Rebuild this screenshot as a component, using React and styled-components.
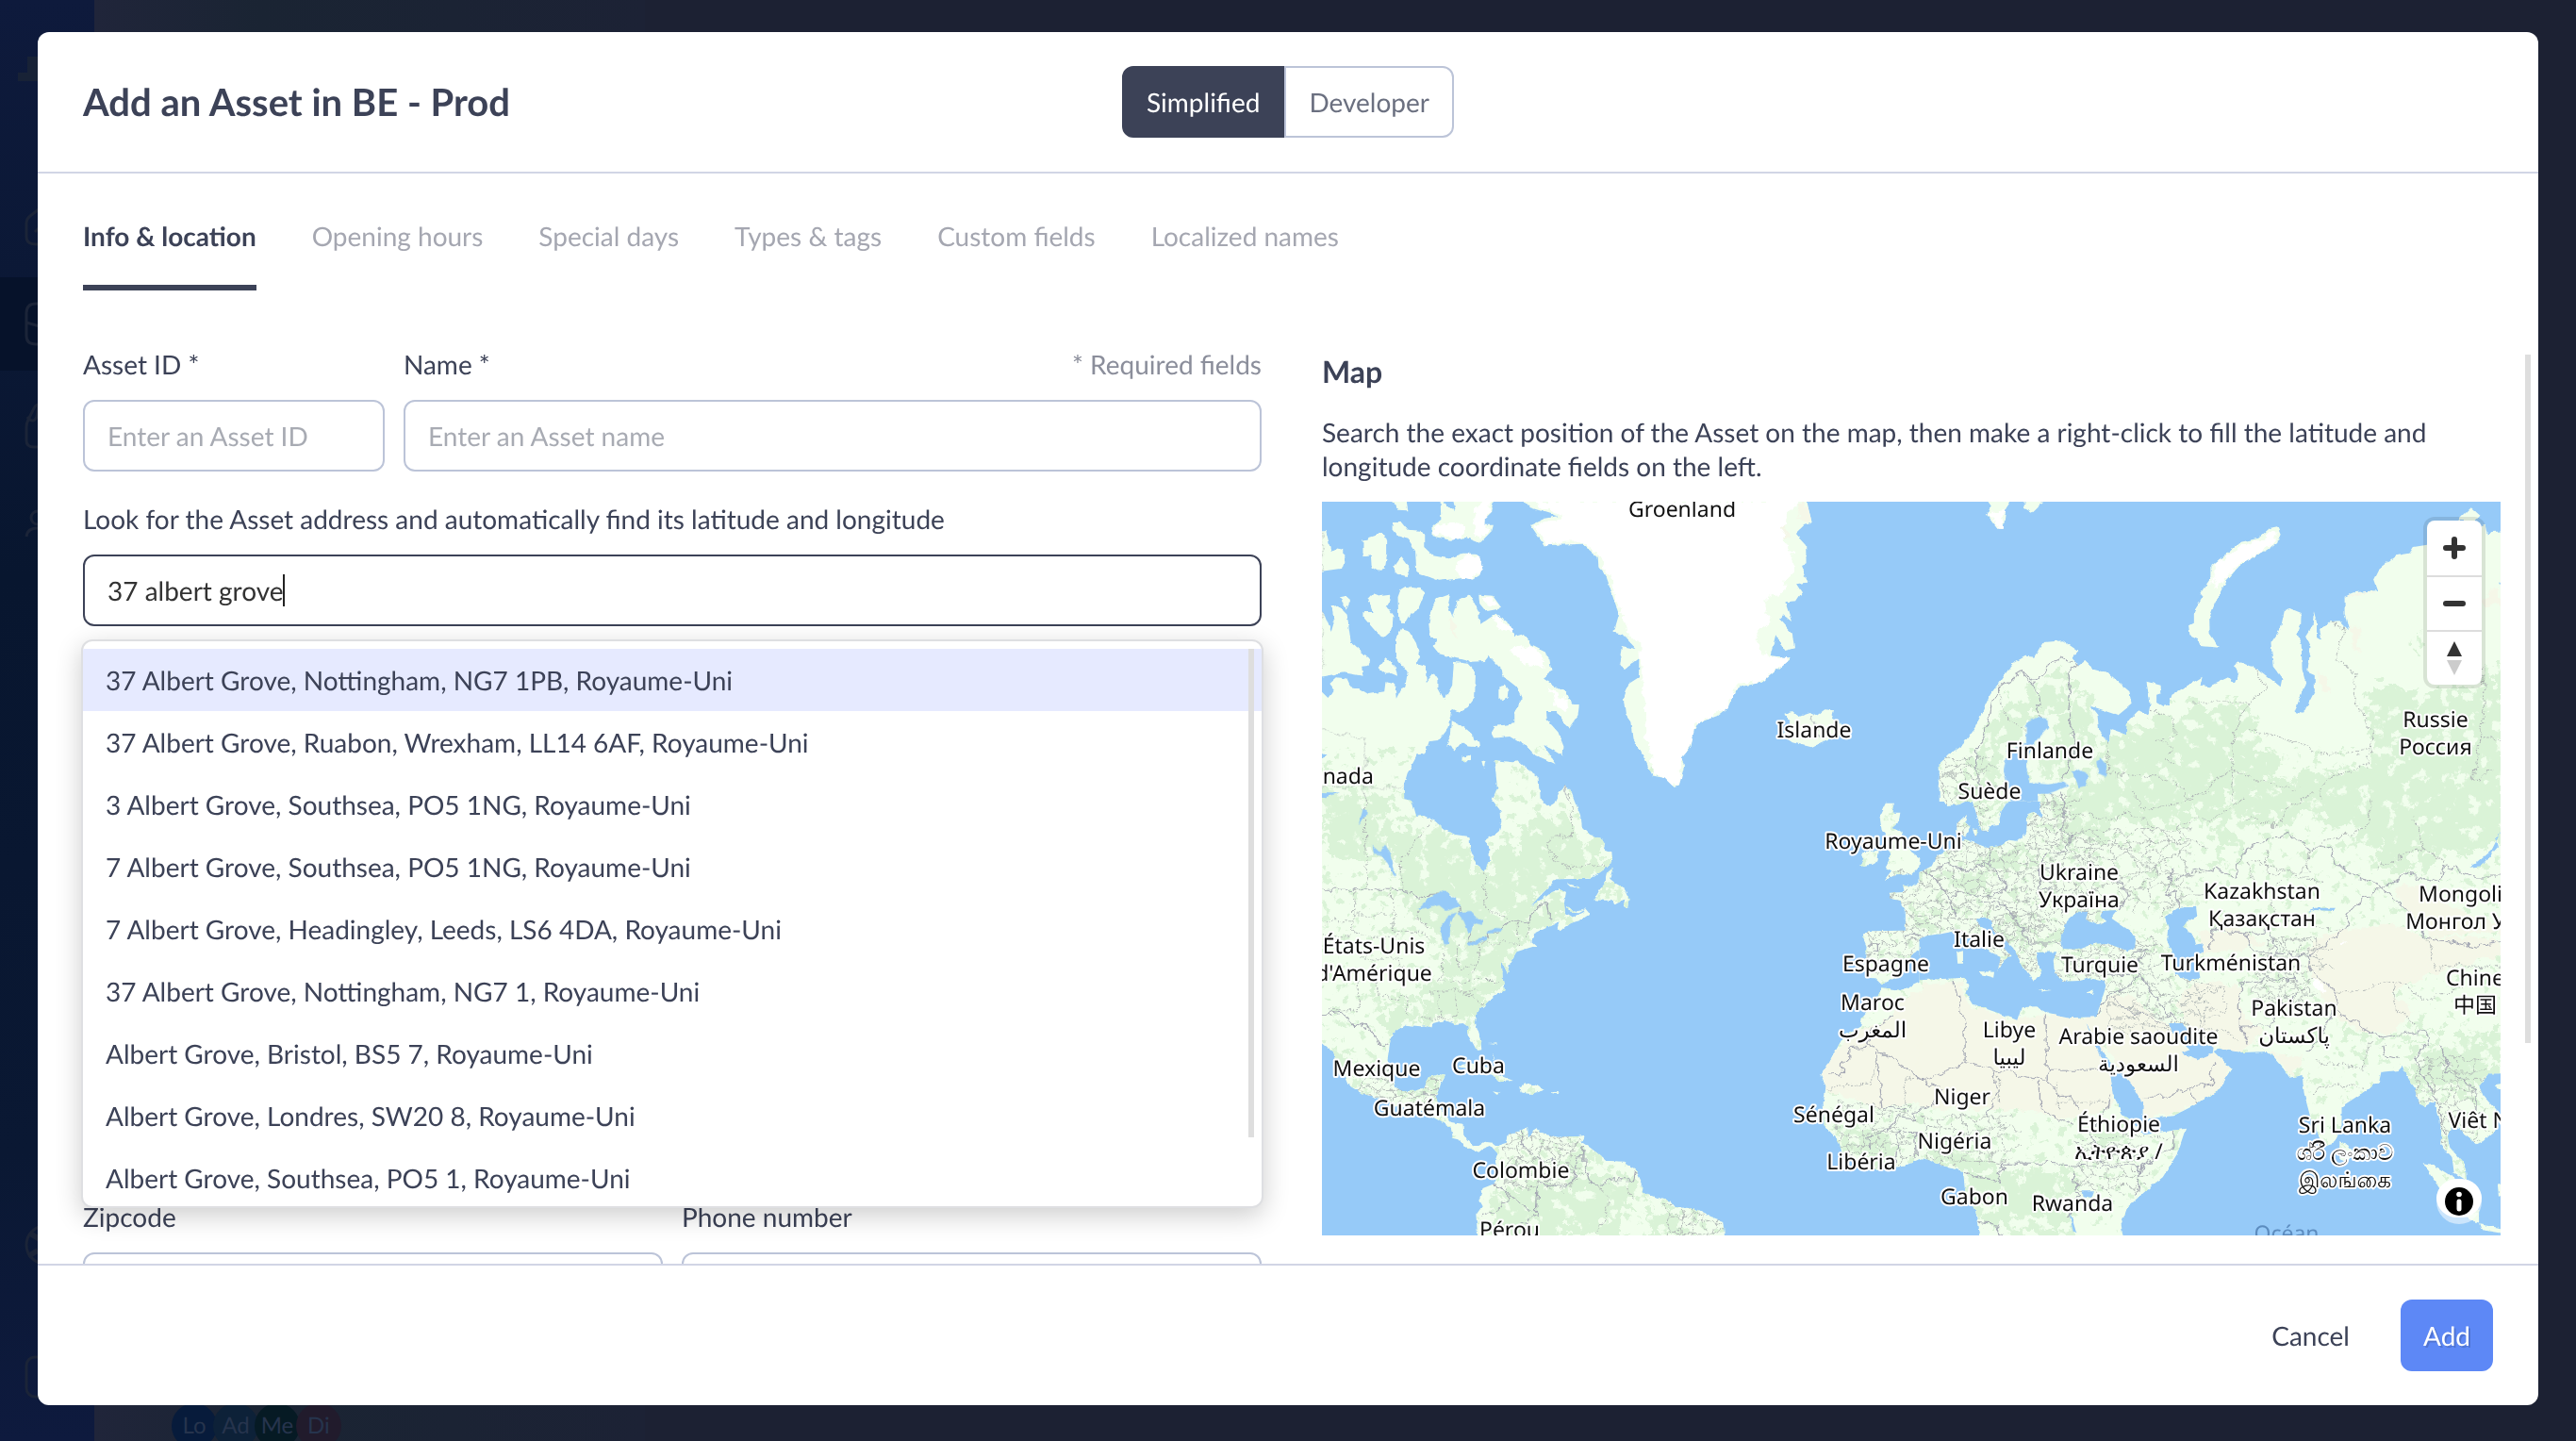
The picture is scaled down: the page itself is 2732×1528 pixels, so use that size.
import React from 'react';
import styled, { createGlobalStyle, ThemeProvider } from 'styled-components';

const theme = {
    textColor: '#3c4257',
    mutedColor: '#6b7080',
    tabColor: '#a5a7b1',
    placeholderColor: '#a8abb3',
    borderColor: '#bcc4d8',
    lineColor: '#d1d5e5',
    accentColor: '#5d88f6',
    highlightColor: '#e6eaff',
    scrollColor: '#dedede',
};

const GlobalStyle = createGlobalStyle`
    * {
        box-sizing: border-box;
    }
    html, body, #root {
        height: 100%;
    }
    body {
        background-color: #1c2133;
        color: ${theme.textColor};
        font-family: Lato, "Noto Sans", sans-serif;
        font-size: 28px;
        line-height: 36px;
        margin: 0;
        overflow: hidden;
        text-rendering: geometricPrecision;
    }
    button, input {
        font: inherit;
        text-rendering: inherit;
    }
`;

/* ---------- page behind the dialog ---------- */

const Page = styled.div`
    display: grid;
    grid-template-columns: 100px 584px 1fr;
    height: 100%;
`;
const Sidebar = styled.div`
    background: linear-gradient(180deg, #0e1a3c, #08162f 40%, #0a1833 80%, #0e1a3e);
    overflow: hidden;
`;
const SidebarIcons = styled.svg`
    display: block;
    height: 100%;
    width: 100px;
`;
const Panel = styled.div`
    align-items: flex-end;
    background: linear-gradient(90deg, #20253a, #1a2433 30%, #1c2235);
    display: flex;
    height: 100%;
    overflow: hidden;
    padding: 0 82px;
`;
const Avatars = styled.div`
    display: flex;
    margin-bottom: -8px;
`;
const Avatar = styled.div`
    background-color: ${(props) => props.$color};
    border-radius: 50%;
    color: #26344d;
    font-size: 24px;
    height: 48px;
    line-height: 48px;
    margin-right: -4px;
    text-align: center;
    width: 48px;
`;

/* ---------- dialog ---------- */

const Dialog = styled.div`
    background-color: #fff;
    border-radius: 12px;
    display: flex;
    flex-direction: column;
    inset: 34px 40px 38px;
    overflow: hidden;
    position: fixed;
`;
const Header = styled.header`
    align-items: center;
    border-bottom: 2px solid ${(props) => props.theme.lineColor};
    display: grid;
    grid-template-columns: 1fr auto 1fr;
    padding: 36px 48px;
`;
const Title = styled.h1`
    font-size: 40px;
    line-height: 52px;
    margin: 0;
`;
const Toggle = styled.div`
    display: flex;
`;
const ToggleButton = styled.button`
    background-color: ${(props) => props.$active ? props.theme.textColor : '#fff'};
    border: 2px solid ${(props) => props.$active ? props.theme.textColor : props.theme.borderColor};
    border-radius: ${(props) => props.$active ? '12px 0 0 12px' : '0 12px 12px 0'};
    color: ${(props) => props.$active ? '#fff' : props.theme.mutedColor};
    height: 76px;
    padding: 0 24px;
`;
const Tabs = styled.nav`
    display: flex;
    flex-shrink: 0;
    gap: 59px;
    padding: 48px 48px 0;
`;
const Tab = styled.button`
    background: none;
    border: 0;
    border-bottom: 6px solid ${(props) => props.$active ? props.theme.textColor : 'transparent'};
    color: ${(props) => props.$active ? props.theme.textColor : props.theme.tabColor};
    font-weight: ${(props) => props.$active ? 700 : 400};
    padding: 0 0 34px;
`;
const Body = styled.main`
    display: grid;
    flex: 1;
    gap: 64px;
    grid-template-columns: 1fr 1fr;
    min-height: 0;
    overflow: hidden;
    padding: 60px 40px 0 48px;
    position: relative;
`;
const BodyScroll = styled.div`
    background-color: ${(props) => props.theme.scrollColor};
    height: 730px;
    position: absolute;
    right: 8px;
    top: 68px;
    width: 6px;
`;
const Footer = styled.footer`
    align-items: center;
    border-top: 2px solid ${(props) => props.theme.lineColor};
    display: flex;
    flex-shrink: 0;
    gap: 24px;
    justify-content: flex-end;
    padding: 36px 48px;
`;
const FooterButton = styled.button`
    background-color: ${(props) => props.$primary ? props.theme.accentColor : 'transparent'};
    border: 0;
    border-radius: 12px;
    color: ${(props) => props.$primary ? '#fff' : 'inherit'};
    height: 76px;
    padding: 0 ${(props) => props.$primary ? 24 : 30}px;
    text-shadow: ${(props) => props.$primary ? '2px 2px 0 rgba(0, 0, 0, 0.15)' : 'none'};
`;

/* ---------- form ---------- */

const Form = styled.form`
    display: flex;
    flex-direction: column;
    gap: 32px;
`;
const Row = styled.div`
    display: grid;
    gap: 20px;
    grid-template-columns: ${(props) => props.$columns || '1fr'};
    margin-top: ${(props) => props.$below ? '576px' : 0};
`;
const Field = styled.div`
    display: flex;
    flex-direction: column;
    gap: 20px;
    position: relative;
`;
const LabelRow = styled.div`
    display: flex;
    justify-content: space-between;
`;
const Hint = styled.span`
    color: #8b8e9b;
`;
const Input = styled.input`
    background-color: #fff;
    border: 2px solid ${(props) => props.$focused ? props.theme.textColor : props.theme.borderColor};
    border-radius: 12px;
    color: #333;
    height: 76px;
    outline: 0;
    padding: 0 24px;
    width: 100%;
    &::placeholder {
        color: ${(props) => props.theme.placeholderColor};
        opacity: 1;
    }
`;
const Caret = styled.i`
    background-color: #222;
    bottom: 21px;
    height: 34px;
    left: 212px;
    position: absolute;
    width: 2px;
`;
const Suggestions = styled.ul`
    background-color: #fff;
    border: 2px solid #dedfe2;
    border-radius: 12px;
    box-shadow: 0 8px 28px rgba(0, 0, 0, 0.2);
    height: 603px;
    left: -2px;
    list-style: none;
    margin: 0;
    overflow: hidden;
    padding: 8px 0 0;
    position: absolute;
    right: -2px;
    top: 146px;
    z-index: 1;
`;
const Suggestion = styled.li`
    background-color: ${(props) => props.$active ? props.theme.highlightColor : 'transparent'};
    padding: 15px 24px;
`;
const SuggestionScroll = styled.li`
    background-color: ${(props) => props.theme.scrollColor};
    height: 518px;
    position: absolute;
    right: 8px;
    top: 8px;
    width: 6px;
`;

/* ---------- map ---------- */

const MapTitle = styled.h2`
    font-size: 32px;
    line-height: 52px;
    margin: 0 0 20px;
`;
const MapText = styled.p`
    margin: 0 0 20px;
`;
const MapFrame = styled.div`
    aspect-ratio: 1250 / 778;
    overflow: hidden;
    position: relative;
`;
const MapSvg = styled.svg`
    display: block;
    height: 100%;
    width: 100%;
    text {
        fill: #111;
        font-family: "Noto Sans", "Noto Sans CJK SC", "DejaVu Sans", sans-serif;
        font-size: 23px;
        paint-order: stroke;
        stroke: #fff;
        stroke-linejoin: round;
        stroke-width: 4px;
        text-anchor: middle;
    }
    text.sea {
        fill: #5c8cbf;
        stroke: none;
    }
`;
const MapControls = styled.div`
    background-color: #fff;
    border-radius: 8px;
    box-shadow: 0 0 0 4px rgba(0, 0, 0, 0.1);
    display: flex;
    flex-direction: column;
    position: absolute;
    right: 20px;
    top: 20px;
`;
const MapButton = styled.button`
    align-items: center;
    background: none;
    border: 0;
    display: flex;
    height: 58px;
    justify-content: center;
    padding: 0;
    width: 58px;
    & + & {
        border-top: 2px solid #ddd;
    }
`;
const MapInfo = styled.button`
    background: rgba(255, 255, 255, 0.5);
    border: 0;
    border-radius: 24px;
    bottom: 12px;
    height: 48px;
    padding: 0;
    position: absolute;
    right: 20px;
    width: 48px;
    svg {
        display: block;
    }
`;

// Each tile keeps the coordinates of its own sheet, the matrix puts it on the map.
const tiles = [
    {
        id: 'nw',
        matrix: 'matrix(0.4209 0 0 0.3333 -2 -182)',
        land: [
            '0,640 15,640 28,705 45,692 60,695 60,740 55,758 0,768',
            '108,670 120,668 122,660 135,655 140,648 162,648 169,670 169,715 163,758 143,765 130,755 128,715 108,718',
            '182,612 205,612 220,635 255,638 262,652 262,690 285,718 325,727 360,710 392,710 405,725 410,750 402,780 384,794 365,788 300,797 243,770 240,700 222,665 195,655 182,635',
            '205,720 220,745 224,765 218,783 190,775 186,755',
            '175,540 218,546 222,574 195,572 190,556',
            '303,540 320,560 342,575 335,540 437,540 433,578 415,600 414,620 437,620 433,638 403,677 368,660 328,668 284,655 284,622 305,603',
            '50,850 65,846 76,858 66,890',
            '122,855 135,838 152,846 176,842 177,860 168,880 184,910 182,955 162,977 145,965 108,912 108,897 132,897',
            '203,825 215,816 250,822 265,832 248,885 230,900 214,936 202,935 197,890 196,850',
            '278,900 285,870 295,855 328,840 322,880 333,912 345,865 378,843 400,895 402,938 443,902 480,940 490,975 515,966 530,998 565,1020 578,1050 583,1085 562,1108 600,1140 620,1150 635,1190 653,1192 650,1225 628,1265 612,1245 598,1215 570,1215 572,1240 600,1280 614,1325 612,1355 562,1318 595,1382 540,1350 520,1325 478,1293 440,1298 432,1278 440,1260 490,1252 490,1215 510,1170 500,1140 460,1100 458,1080 425,1037 415,1053 380,1055 300,1030 284,1005 297,982 278,980 274,935',
            '400,842 435,845 458,885 418,895 402,870',
            '0,1145 20,1170 35,1145 22,1125 40,1105 65,1108 75,1135 98,1140 122,1158 162,1150 165,1120 188,1125 192,1172 205,1140 215,1135 220,1090 190,1040 190,985 205,948 222,955 242,995 252,1040 243,1062 265,1070 268,1120 287,1090 298,1110 298,1140 313,1175 333,1130 337,1055 375,1062 392,1085 390,1170 372,1200 348,1215 332,1205 322,1265 297,1305 275,1308 264,1348 245,1352 220,1410 211,1450 211,1500 0,1500',
            '0,885 10,900 28,960 35,930 30,880 45,875 68,905 78,995 125,1045 120,1068 105,1070 108,1100 60,1090 0,1103',
            '165,1042 190,1070 195,1100 180,1092 165,1094 146,1075',
            '450,1135 465,1130 474,1145 472,1170 460,1180 450,1165',
            '332,1243 352,1255 385,1290 388,1305 402,1310 404,1328 375,1325 358,1310 338,1340 330,1322 317,1325 330,1290',
            '360,1358 380,1352 380,1365 368,1376 360,1370',
            '407,1375 417,1372 412,1395',
            '438,1368 485,1375 500,1372 525,1400 550,1420 554,1500 433,1500 447,1460 442,1400',
            '598,1500 617,1445 638,1500',
            '512,540 530,565 600,592 565,600 530,620 565,685 660,680 700,722 702,755 720,780 735,835 753,905 740,962 762,968 797,1015 760,1005 754,1065 770,1077 804,1045 803,1105 778,1125 765,1175 770,1225 785,1250 790,1300 812,1350 838,1418 868,1425 890,1452 905,1448 917,1390 912,1360 935,1325 942,1275 952,1250 1000,1228 1028,1200 1045,1150 1062,1135 1115,1120 1186,1043 1135,1035 1148,970 1172,1020 1195,1012 1190,965 1157,918 1165,905 1188,927 1172,865 1200,862 1214,835 1200,808 1227,803 1212,750 1225,742 1224,685 1197,648 1220,620 1240,615 1225,540',
            '1170,1222 1190,1212 1207,1230 1235,1218 1250,1228 1272,1207 1295,1210 1290,1235 1310,1250 1318,1280 1262,1312 1238,1327 1190,1312 1165,1290 1185,1250',
            '1562,1380 1580,1360 1580,1500 1562,1500',
        ],
        snow: [
            '520,540 610,592 570,605 540,622 570,678 660,676 706,722 725,780 760,905 775,960 806,1005 812,1120 820,1240 826,1320 840,1412 890,1450 905,1445 915,1390 912,1360 935,1325 942,1275 952,1250 985,1225 1020,1200 1045,1150 1062,1128 1115,1115 1180,1045 1110,1030 1105,960 1140,930 1125,900 1125,850 1170,830 1165,800 1195,770 1190,700 1165,660 1175,600 1200,540',
            '290,625 330,612 365,622 362,655 330,664 290,652',
            '390,570 412,546 433,546 430,580 412,605 412,625 432,628 403,672 386,650',
            '340,760 350,725 370,712 392,712 405,728 408,750 400,778 384,792 355,786',
            '440,915 455,912 485,950 482,965 450,950',
            '480,1020 530,1000 560,1035 565,1075 540,1065 515,1060',
            '570,1135 600,1150 625,1195 620,1215 598,1190',
            '405,850 430,848 450,880 430,878',
        ],
        forest: ['0,1455 90,1452 110,1470 200,1460 200,1500 0,1500', '0,1370 20,1375 25,1400 0,1400'],
        sand: ['1150,650 1175,612 1180,660', '1200,546 1225,546 1235,600 1210,610', '325,910 340,930 345,985 330,960'],
        water: ['0,1345 18,1355 0,1365', '0,1470 50,1472 20,1484 0,1490'],
        borders: ['1238,1220 1240,1250 1260,1290', '615,1445 620,1480 630,1500'],
        dotted: ['0,1262 20,1280 113,1300 113,1500', '0,1453 210,1453', '5,546 5,1100'],
    },
    {
        id: 'ne',
        matrix: 'matrix(0.4413 0 0 0.3333 638 -182)',
        land: [
            '152,540 212,540 198,568 192,632 178,632 152,590 163,560',
            '245,540 288,548 262,581 240,565',
            '850,625 858,650 850,675 825,700 768,740 728,800 700,870 687,915 688,965 711,1010 665,1005 660,982 640,970 637,940 650,930 650,895 672,848 665,838 692,785 692,750 760,675 805,662 832,630',
            '38,1500 38,1380 60,1352 95,1318 125,1262 160,1160 215,1060 245,1037 268,1040 290,993 335,988 373,1022 358,1045 372,1068 388,1053 410,1080 445,1092 495,1150 500,1190 468,1225 400,1195 418,1225 422,1275 447,1315 447,1270 487,1288 490,1245 517,1210 540,1225 545,1190 536,1118 570,1130 572,1155 560,1160 560,1185 575,1197 590,1192 597,1160 670,1103 665,1130 685,1135 732,1105 747,1125 757,1095 748,1070 755,1053 805,1080 858,1135 862,1108 840,1070 835,995 858,950 868,890 880,885 908,900 907,935 898,965 908,1000 910,1080 918,1120 892,1215 912,1220 928,1180 940,1150 940,1095 923,1085 930,1010 918,975 935,940 938,895 945,930 945,975 957,985 952,955 975,928 1000,925 1022,955 1012,900 1012,848 1035,835 1092,828 1083,795 1098,755 1135,718 1168,710 1178,690 1210,683 1350,620 1355,655 1365,642 1400,640 1400,1500',
            '1285,605 1316,565 1338,590 1325,608',
        ],
        snow: [
            '845,635 850,670 768,735 720,805 700,822 692,790 705,740 760,685 815,665',
            '165,575 195,570 190,630 178,630 160,595',
        ],
        forest: [
            '150,1300 200,1180 330,1062 345,1110 340,1200 300,1230 270,1220 240,1260 240,1320 195,1340 170,1420 180,1500 90,1500 110,1400',
            '360,1130 390,1150 400,1200 420,1290 400,1350 340,1400 260,1420 310,1280',
            '440,1330 500,1260 600,1220 660,1195 780,1190 800,1260 770,1310 850,1360 830,1400 900,1440 960,1400 1060,1390 1075,1290 1060,1190 1080,1120 1150,1150 1210,1150 1270,1130 1340,1140 1345,1070 1400,1065 1400,1500 330,1500 380,1420',
            '1165,990 1200,975 1210,1020 1185,1025',
        ],
        sand: [
            '1345,860 1387,815 1387,870 1350,880',
            '1022,940 1045,945 1048,1020 1035,1010',
            '945,1090 970,1100 978,1160 960,1140',
            '1020,838 1090,830 1060,842 1020,848',
        ],
        water: [
            '275,1228 298,1240 300,1265 268,1310 250,1360 248,1400 255,1440 300,1445 335,1437 348,1450 300,1475 275,1475 275,1500 210,1500 193,1400 200,1340 247,1315 246,1260 258,1240',
            '370,1395 397,1415 390,1450 375,1455 355,1405',
            '425,1360 440,1385 438,1420 420,1410 415,1370',
            '1382,808 1390,800 1390,815',
        ],
        borders: [
            '130,1500 128,1330 150,1300 165,1180 190,1130 240,1090 270,1115 310,1060 335,1045 370,1065 345,1090 355,1150 350,1220 362,1300 365,1350 330,1437',
            '240,1095 270,1130 283,1245',
        ],
        dotted: [
            '645,1185 780,1185 825,1145 800,1080',
            '780,1185 745,1280 740,1500',
            '545,1210 605,1230 605,1290 565,1300 600,1330 580,1370 605,1380',
            '985,925 1010,960 990,1050 1040,1090 1035,1180 1080,1280 1070,1380 960,1430 950,1500',
            '780,1270 880,1300 950,1350 1070,1340',
            '600,1430 640,1500 740,1395 800,1430 900,1460',
            '1340,1070 1350,1150 1340,1290 1387,1310',
            '1340,1290 1320,1430 1370,1400',
            '445,1300 440,1410 590,1425',
            '172,1110 200,1240 250,1270',
        ],
    },
    {
        id: 'sw',
        matrix: 'matrix(0.4209 0 0 0.3333 -2 308)',
        land: [
            '0,-10 211,-10 212,22 232,28 243,78 262,75 290,92 310,115 340,135 377,142 378,180 395,230 415,250 428,215 425,170 415,155 450,125 457,95 455,60 432,22 443,-10 554,-10 555,20 577,45 590,35 608,-10 630,-10 658,80 660,110 680,135 708,148 718,165 715,180 735,190 737,225 720,240 680,275 595,277 530,362 560,340 585,318 605,307 620,318 615,355 618,385 635,398 662,382 668,370 680,388 655,408 628,418 605,442 598,432 603,412 540,450 533,475 545,488 495,508 480,540 472,575 458,540 460,590 465,630 440,650 395,700 392,735 403,780 407,820 395,822 375,775 372,745 360,735 340,738 315,725 285,735 280,748 262,742 250,745 215,740 190,760 177,790 170,850 190,935 210,952 240,950 262,940 272,908 300,897 316,902 300,940 292,965 300,1000 330,1050 360,1055 362,1095 372,1110 385,1125 400,1125 415,1112 435,1115 445,1125 470,1115 475,1085 505,1078 523,1062 525,1100 545,1065 555,1085 600,1097 650,1095 665,1092 668,1105 655,1110 680,1130 700,1150 720,1172 765,1175 795,1200 812,1245 810,1270 850,1290 885,1302 895,1320 945,1325 985,1350 1015,1365 1020,1420 398,1420 393,1345 408,1318 400,1300 410,1260 440,1245 448,1215 440,1180 448,1150 430,1125 410,1135 400,1145 370,1130 350,1105 335,1100 330,1070 300,1045 250,1010 190,1000 150,975 100,955 70,930 60,900 40,870 35,830 0,795',
            '738,240 730,275 745,290 765,305 778,340 775,368 765,360 768,340 740,360 735,345 690,343 705,310 718,290 725,255',
            '622,290 650,300 655,305 630,300',
            '622,365 640,380 665,374 650,385 628,382',
            '340,872 380,862 435,880 450,900 487,918 450,922 435,900 380,880',
            '502,937 520,928 545,932 565,948 530,960 505,955',
            '435,952 455,957 445,962',
            '585,953 600,955 598,960 585,958',
            '425,798 445,796 446,808 442,800',
            '435,830 440,845 436,850',
            '1425,35 1447,35 1440,65 1462,65 1458,95 1440,115 1467,125 1470,150 1490,190 1512,210 1510,235 1490,262 1450,265 1420,282 1440,250 1425,240 1435,215 1435,195 1425,165 1425,130 1415,120 1410,75',
            '1370,190 1408,185 1405,220 1390,230 1360,236 1370,210 1365,195',
            '1580,190 1545,235 1515,255 1512,280 1488,302 1468,295 1472,318 1432,320 1435,338 1460,345 1475,375 1475,440 1382,442 1367,460 1377,490 1370,560 1378,590 1398,592 1415,612 1450,590 1480,560 1490,520 1530,485 1532,465 1580,445',
            '1580,597 1510,605 1465,630 1415,622 1400,665 1365,720 1362,745 1320,775 1298,825 1283,860 1262,900 1275,935 1268,990 1270,1060 1300,1100 1315,1150 1360,1185 1400,1200 1470,1190 1515,1165 1580,1165',
        ],
        snow: [],
        forest: [
            '0,30 60,10 120,0 200,30 200,150 300,110 340,150 370,200 415,260 430,210 500,150 520,90 590,60 640,110 720,200 720,240 670,270 590,270 530,360 600,310 615,350 615,400 540,450 530,480 490,500 465,630 392,700 385,740 250,740 240,680 260,620 320,560 350,500 300,480 240,400 200,340 190,200 20,190',
            '140,700 200,640 240,690 220,740 170,770',
            '20,760 60,830 80,900 140,960 100,940 40,850',
            '270,910 310,905 295,950 260,990 190,990',
            '480,1250 560,1240 600,1260 700,1200 800,1240 830,1300 740,1330 760,1410 420,1410 440,1300',
            '560,1160 650,1130 690,1180 660,1200',
            '820,1330 910,1330 900,1410 840,1410',
            '1300,1070 1380,1070 1450,1100 1450,1190 1330,1160',
            '1480,400 1560,360 1560,440 1490,440',
            '700,300 770,310 760,345 700,340',
            '360,780 395,780 400,815',
        ],
        sand: ['1580,615 1500,640 1475,660 1440,720 1365,760 1298,825 1262,900 1275,945 1300,960 1410,1000 1480,990 1580,1010'],
        water: [
            '245,372 270,340 300,315 322,318 345,345 352,362 318,378 300,360 272,368',
            '325,390 345,382 330,410 325,480 310,488 303,430',
            '345,382 378,378 395,400 410,410 408,422 385,415 382,440 375,450 362,410',
            '370,485 400,465 422,458 420,470 375,492',
            '418,445 445,432 460,435 455,447 425,450',
            '165,165 180,200 190,270 172,235 155,200 135,195 132,170 150,190',
            '108,50 118,60 115,80 97,102 103,75',
        ],
        borders: [
            '0,310 206,310 210,318 260,332 300,330 345,365 378,400 380,450 370,488 420,465 425,445 455,440 478,412 525,412 550,360 570,352 578,400 585,405',
            '0,710 55,700 90,750 110,738 130,755 150,805 172,812',
            '258,965 300,965 300,940',
            '510,1070 510,1120 545,1170 580,1160 600,1200 640,1200 670,1130',
            '665,1130 665,1180 690,1250 740,1235 790,1235 795,1205',
            '550,1240 605,1258 640,1230 640,1200',
            '430,1240 470,1275 505,1310 545,1330 550,1250',
            '470,1275 470,1300 408,1350', '545,1330 550,1345 505,1370',
            '1440,720 1390,760 1380,800 1533,930 1560,940',
            '1403,832 1416,1000 1480,1010', '1425,832 1403,832',
            '1283,900 1315,897 1315,870 1330,850 1330,812 1378,808',
            '1568,940 1540,1000 1495,1015 1500,1040 1450,1035 1420,1090 1380,1095 1385,1140',
            '1455,1080 1500,1082 1505,1160', '1455,1080 1450,1190',
            '1475,450 1530,468', '1382,490 1405,490 1405,505 1378,510', '1520,240 1568,290',
        ],
        dotted: [
            '113,0 113,150 120,310', '206,310 205,210 287,90', '415,250 415,370 470,400',
            '630,0 635,140 580,145 580,200 620,240 720,230', '85,310 85,460 200,460',
            '0,410 85,410', '85,387 187,387', '180,310 187,445 255,445 275,470', '0,458 100,458',
            '100,525 215,525', '98,595 98,695 18,695', '140,600 145,645 220,660 220,715',
            '205,530 205,580', '308,490 308,580 290,600 465,602', '345,490 350,560 400,540',
            '273,633 400,633', '400,490 403,530 380,580', '300,635 300,720', '335,635 345,715 250,715',
            '365,635 400,670 425,690', '400,480 500,480 500,412', '520,412 520,465', '250,380 240,400 275,430',
            '730,1310 700,1410', '730,1310 700,1250', '920,1330 905,1410', '790,1300 770,1250',
            '1275,940 1385,930 1403,850', '1490,895 1465,940 1480,1000',
        ],
    },
    {
        id: 'se',
        matrix: 'matrix(0.4413 0 0 0.3333 638 308)',
        land: [
            '38,-10 40,10 55,42 85,40 115,20 125,60 140,125 155,125 160,108 180,105 187,60 210,15 210,-10',
            '80,100 105,68 100,95 112,110 100,140 80,130',
            '118,115 132,120 125,145',
            '275,-10 285,15 280,50 285,80 265,62 250,70 247,133 225,155 205,152 180,172 155,178 130,165 100,150 60,180 30,205 20,235 -10,255 -10,1165 0,1165 60,1195 95,1205 100,1270 125,1330 135,1420 480,1420 475,1375 490,1320 540,1262 575,1225 610,1150 630,1070 530,1090 480,1020 455,960 450,900 415,800 470,900 500,930 525,990 525,1040 600,1030 645,1000 715,945 720,920 740,880 697,825 710,815 765,828 828,825 845,850 865,880 880,908 910,900 915,960 930,1035 960,1125 985,1115 1005,1060 1005,1000 1040,970 1095,920 1100,890 1140,885 1150,870 1165,910 1180,940 1190,990 1205,1000 1228,980 1240,1040 1245,1085 1242,1120 1270,1160 1275,1210 1305,1235 1303,1200 1295,1175 1265,1130 1260,1100 1275,1050 1300,1090 1330,1120 1345,1110 1375,1075 1375,1010 1345,965 1335,935 1360,895 1400,895 1400,-10',
            '1000,1110 1020,1120 1035,1150 1020,1175 1000,1165',
            '1200,1180 1225,1185 1290,1240 1335,1330 1335,1370 1310,1360 1240,1260',
            '1335,1375 1400,1390 1400,1405 1340,1392',
            '1380,1250 1400,1240 1400,1300 1382,1285',
            '1375,930 1400,925 1400,955 1378,945',
        ],
        snow: ['935,600 950,600 975,630 960,635 935,615', '1000,480 1020,478 1005,490'],
        forest: [
            '335,-10 1400,-10 1400,150 1320,200 1250,190 1180,240 1100,250 1090,180 1040,120 960,60 870,90 780,80 740,120 730,220 710,230 700,100 620,90 540,100 480,90 420,150 360,180 330,120',
            '130,60 185,50 165,110 140,120',
            '180,180 280,200 240,240 190,250 150,300 100,320 60,290 120,240',
            '180,410 240,440 250,500 220,490', '250,440 330,450 330,495 260,490',
            '345,490 440,485 430,500 350,520', '510,440 590,500 560,500',
            '950,700 1040,750 1150,780 1240,770 1170,800 1100,800 1000,760',
            '1160,860 1240,780 1330,780 1400,740 1400,850 1330,940 1230,940 1200,980 1170,910',
            '0,1130 100,1110 160,1180 180,1220 90,1200 30,1190',
            '200,1210 300,1190 370,1240 350,1300 330,1380 240,1410 160,1360 110,1290 110,1220',
            '420,1060 480,1080 470,1130 420,1120',
            '1270,1170 1300,1180 1300,1230 1280,1210', '915,930 930,1020 950,1060 935,1050',
            '1380,1250 1400,1250 1400,1290', '1250,900 1300,930 1350,1000 1370,1020 1300,980',
        ],
        sand: [
            '-10,615 90,600 110,680 225,725 300,705 410,720 440,850 470,960 440,1010 330,1040 250,1010 -10,1005',
            '410,740 440,660 490,640 540,690 610,760 640,850 700,820 740,880 715,945 600,1030 525,1040 500,960',
            '630,620 700,600 760,620 765,700 810,760 770,830 700,815 650,760 610,680',
            '660,440 750,450 770,500 670,510', '700,390 780,460 820,480 760,500',
            '930,480 1000,440 1120,420 1210,460 1400,470 1400,520 1260,560 1180,600 1130,640 1180,700 1120,770 1040,750 980,700 920,560',
            '1130,300 1180,290 1250,350 1400,440 1220,460 1160,370', '830,830 910,840 890,900 860,870',
        ],
        water: [
            '-10,465 15,455 45,450 85,440 112,460 150,500 185,525 178,570 200,525 210,522 165,450 130,420 130,400 150,398 162,410 165,440 200,475 222,505 232,540 265,602 285,570 275,545 270,510 320,508 312,535 315,575 335,602 375,600 400,592 435,602 438,620 415,715 345,718 300,705 270,682 235,685 225,725 185,705 120,675 103,640 110,615 100,590 -10,598',
            '345,410 370,380 395,380 390,405 420,420 440,410 425,395 430,378 465,375 450,400 495,440 510,465 508,495 490,505 440,480 410,482 375,500 335,498 330,465 340,430',
            '580,400 610,370 655,362 658,395 635,410 625,430 650,460 655,485 675,480 670,510 655,520 665,590 640,600 605,580 600,520 585,470 588,430',
            '590,735 625,735 640,775 680,800 697,812 695,830 660,850 620,830 640,820 600,770',
            '390,735 420,800 440,850 460,870 500,930 527,990 527,1050 480,1030 455,960 450,900 415,810',
            '1390,120 1375,150 1380,175 1340,235 1310,240 1330,225 1365,185',
            '925,385 940,368 990,368 985,378 940,375',
            '380,1270 410,1270 405,1290 382,1285',
            '350,1340 358,1360 368,1405 360,1400',
        ],
        islands: [
            '133,570 170,572 168,590 135,578',
            '80,510 95,505 95,545 82,545',
            '275,625 308,630 290,633',
            '390,638 410,628 405,642',
        ],
        borders: [
            '330,0 340,60 330,120 360,130 340,180 280,210 290,240 400,260 480,290 490,330 470,375',
            '600,240 580,330 610,320 610,370', '600,280 680,240 750,270 770,180 880,130 930,190 960,160 1000,240 1100,300 1030,370 1010,440 920,520 850,510 830,440 770,450',
            '1100,300 1160,260 1240,290 1250,230 1330,270 1400,270',
            '1100,300 1160,370 1210,460 1330,490 1400,465',
            '693,495 693,435 770,450 790,500 850,520', '920,520 930,570 980,620 1000,700 1100,780 1200,760 1210,790 1180,850',
            '980,700 960,760 920,830', '760,610 760,740 780,800', '760,610 830,590 900,600', '760,745 830,740 850,690 900,640',
            '295,705 295,920 380,1010', '295,886 435,886', '75,600 100,760 100,860 0,920',
            '100,860 165,880 295,920', '165,880 175,960 150,1040', '282,925 282,1010 360,1060',
            '415,715 440,650 510,700 590,740', '440,650 510,600 520,580 440,580', '520,580 570,680 610,730',
            '525,970 580,970 640,940 690,930 695,850', '640,940 655,985',
            '155,178 160,230 110,250 60,230 20,250', '160,230 200,300 170,330 110,320 60,330',
            '240,440 250,480 330,480', '280,210 280,300 330,330', '130,350 200,360 240,440', '0,240 40,290 60,330 75,400',
            '450,960 440,1010 400,1080 430,1190', '430,1190 520,1190 600,1130 600,1080', '520,1190 510,1280',
            '95,1210 180,1240 190,1180 300,1180 430,1190', '360,1200 370,1280 350,1350', '130,1370 180,1375 190,1410',
            '520,540 540,500 500,510', '1110,800 1115,840 1140,850', '1180,850 1240,990 1250,1090',
            '1240,800 1260,880 1330,950 1330,1060',
        ],
        dotted: [
            '340,60 450,90 490,60 560,120 620,160 610,100 700,80 770,20', '500,0 530,60 600,40 680,0',
            '420,140 500,190 560,180 590,240', '490,330 560,260 540,200', '780,80 850,110 870,60 940,0',
            '800,300 780,220 850,240 960,290', '860,280 830,360 880,410 1000,440', '960,160 1060,120 1080,20',
            '1090,240 1200,180 1180,80', '1200,180 1260,230', '820,190 830,260 920,250 925,190',
            '990,640 1060,620 1140,600 1200,660 1300,620', '1140,600 1130,680 1180,740',
            '650,640 720,620 730,700 680,690 670,780', '325,920 325,1010', '325,985 440,985', '180,900 180,990',
            '1210,470 1230,560 1300,550 1400,560', '1070,800 1060,880 940,860', '930,950 1000,930 1060,940',
            '380,1100 500,1090 590,1100', '640,800 720,760 760,790',
        ],
    },
];

// Small districts: an irregular honeycomb over the densely divided regions.
const meshAreas = [
    { x: 575, y: 395, width: 60, height: 95, cell: 13 },
    { x: 640, y: 360, width: 180, height: 100, cell: 13 },
    { x: 655, y: 270, width: 40, height: 100, cell: 13 },
    { x: 745, y: 310, width: 45, height: 50, cell: 10 },
    { x: 710, y: 440, width: 50, height: 55, cell: 11 },
    { x: 780, y: 465, width: 110, height: 40, cell: 11 },
    { x: 830, y: 510, width: 100, height: 50, cell: 14 },
    { x: 990, y: 500, width: 55, height: 40, cell: 10 },
    { x: 1000, y: 465, width: 60, height: 30, cell: 11 },
    { x: 40, y: 605, width: 80, height: 35, cell: 11 },
    { x: 195, y: 670, width: 70, height: 60, cell: 11 },
    { x: 545, y: 640, width: 70, height: 55, cell: 13 },
    { x: 640, y: 655, width: 90, height: 50, cell: 13 },
    { x: 1160, y: 590, width: 70, height: 90, cell: 14 },
    { x: 800, y: 680, width: 60, height: 50, cell: 14 },
    { x: 800, y: 350, width: 110, height: 80, cell: 18 },
    { x: 365, y: 745, width: 50, height: 40, cell: 12 },
];

const jitter = (a, b) => {
    const n = Math.sin(a * 12.9898 + b * 78.233) * 43758.5453;
    return n - Math.floor(n) - 0.5;
};

const meshPath = ({ x, y, width, height, cell }) => {
    const point = (i, j) => {
        const px = x + i * cell + (j % 2) * cell / 2 + jitter(i + x, j) * cell * 0.7;
        const py = y + j * cell * 0.8 + jitter(j, i + y) * cell * 0.7;
        return `${px.toFixed(1)} ${py.toFixed(1)}`;
    };
    const parts = [];
    for (let j = 0; j < height / (cell * 0.8); j++) {
        for (let i = 0; i < width / cell; i++) {
            parts.push(`M${point(i, j)}L${point(i + 1, j)}`);
            parts.push(`M${point(i, j)}L${point(i, j + 1)}`);
        }
    }
    return parts.join('');
};

const mapLabels = [
    [382, 8, 'Groenland'], [522, 242, 'Islande'], [14, 291, 'Canada'], [772, 264, 'Finlande'],
    [708, 307, 'Suède'], [1181, 231, 'Russie', 'Россия'], [606, 360, 'Royaume-Uni'],
    [803, 393, 'Ukraine', 'Україна'], [997, 413, 'Kazakhstan', 'Қазақстан'],
    [1214, 416, 'Mongolie', 'Монгол Улс'], [55, 471, 'États-Unis', 'd\'Amérique'],
    [598, 490, 'Espagne'], [697, 464, 'Italie'], [825, 491, 'Turquie'], [964, 489, 'Turkménistan'],
    [1223, 505, 'Chine', '中国'], [584, 531, 'Maroc', 'المغرب'], [729, 560, 'Libye', 'ليبيا'],
    [866, 567, 'Arabie saoudite', 'السعودية'], [1031, 537, 'Pakistan', 'پاکستان'],
    [679, 631, 'Niger'], [671, 678, 'Nigéria'], [543, 650, 'Sénégal'], [572, 700, 'Libéria'],
    [845, 660, 'Éthiopie', 'ኢትዮጵያ /'], [692, 737, 'Gabon'], [796, 744, 'Rwanda'],
    [1085, 661, 'Sri Lanka', 'ශ්රී ලංකාව', 'இலங்கை'], [1244, 656, 'Viêt Nam'],
    [58, 601, 'Mexique'], [166, 598, 'Cuba'], [114, 643, 'Guatémala'], [211, 709, 'Colombie'],
    [199, 772, 'Pérou'],
];

const Shapes = ({ list = [], ...rest }) => (
    <g {...rest}>
        {list.map((points) => <polygon key={points} points={points} />)}
    </g>
);

const Lines = ({ list, ...rest }) => (
    <g fill="none" {...rest}>
        {list.map((points) => <polyline key={points} points={points} />)}
    </g>
);

const WorldMap = () => (
    <MapSvg viewBox="0 0 1250 778" preserveAspectRatio="xMidYMid slice" role="img" aria-label="Map">
        <defs>
            <filter id="mottle" x="0" y="0" width="1250" height="778" filterUnits="userSpaceOnUse">
                <feTurbulence type="fractalNoise" baseFrequency="0.06" numOctaves="4" seed="3" result="noise" />
                <feDisplacementMap in="SourceGraphic" in2="noise" scale="50" xChannelSelector="R" yChannelSelector="G" result="ragged" />
                <feTurbulence type="fractalNoise" baseFrequency="0.07" numOctaves="4" seed="8" />
                <feColorMatrix values="0 0 0 0 0  0 0 0 0 0  0 0 0 0 0  14 0 0 0 -8.5" result="holes" />
                <feComposite in="ragged" in2="holes" operator="out" />
            </filter>
            <filter id="speckle" x="0" y="0" width="1250" height="778" filterUnits="userSpaceOnUse">
                <feTurbulence type="fractalNoise" baseFrequency="0.1" numOctaves="4" seed="21" />
                <feColorMatrix values="0 0 0 0 0  0 0 0 0 0  0 0 0 0 0  16 0 0 0 -9.8" result="spots" />
                <feComposite in="SourceGraphic" in2="spots" operator="in" />
            </filter>
            <filter id="ragged" x="0" y="0" width="1250" height="778" filterUnits="userSpaceOnUse">
                <feTurbulence type="fractalNoise" baseFrequency="0.09" numOctaves="3" seed="5" />
                <feDisplacementMap in="SourceGraphic" scale="12" xChannelSelector="R" yChannelSelector="G" />
            </filter>
            <filter id="coast" x="0" y="0" width="1250" height="778" filterUnits="userSpaceOnUse">
                <feTurbulence type="fractalNoise" baseFrequency="0.15" numOctaves="2" seed="9" />
                <feDisplacementMap in="SourceGraphic" scale="4" xChannelSelector="R" yChannelSelector="G" />
            </filter>
            <clipPath id="land">
                {tiles.map((tile) => tile.land.map((points) => (
                    <polygon key={tile.id + points} points={points} transform={tile.matrix} />
                )))}
            </clipPath>
        </defs>
        <rect width="1250" height="778" fill="#96caf8" />
        <g filter="url(#coast)">
            {tiles.map((tile) => <Shapes key={tile.id} list={tile.land} transform={tile.matrix} fill="#f1feed" />)}
            <g clipPath="url(#land)">
                <g filter="url(#speckle)">
                    <rect y="260" width="1250" height="518" fill="#daf3d7" />
                </g>
                <g filter="url(#mottle)">
                    {tiles.map((tile) => <Shapes key={tile.id} list={tile.forest} transform={tile.matrix} fill="#daf3d7" />)}
                </g>
                <g filter="url(#ragged)">
                    {tiles.map((tile) => <Shapes key={tile.id} list={tile.sand} transform={tile.matrix} fill="#f5f7e8" />)}
                    {tiles.map((tile) => <Shapes key={tile.id} list={tile.snow} transform={tile.matrix} fill="#fff" />)}
                </g>
            </g>
        </g>
        <g clipPath="url(#land)">
            <g filter="url(#ragged)">
                <path d={meshAreas.map(meshPath).join('')} fill="none" stroke="#b3bab8" strokeDasharray="3 1" />
                {tiles.map((tile) => (
                    <Lines key={tile.id} list={tile.dotted} transform={tile.matrix} stroke="#b0b6b6" strokeWidth="3" strokeDasharray="5 4" />
                ))}
                {tiles.map((tile) => (
                    <Lines key={tile.id} list={tile.borders} transform={tile.matrix} stroke="#a5a8b4" strokeWidth="3" />
                ))}
            </g>
        </g>
        <g filter="url(#coast)">
            {tiles.map((tile) => <Shapes key={tile.id} list={tile.water} transform={tile.matrix} fill="#96caf8" />)}
            {tiles.map((tile) => <Shapes key={tile.id} list={tile.islands} transform={tile.matrix} fill="#f1feed" />)}
        </g>
        {mapLabels.map(([x, y, ...lines]) => lines.map((line, i) => (
            <text key={line} x={x} y={y + 8 + i * 29}>{line}</text>
        )))}
        <text className="sea" x="1023" y="784">Océan</text>
    </MapSvg>
);

const tabs = ['Info & location', 'Opening hours', 'Special days', 'Types & tags', 'Custom fields', 'Localized names'];

const addresses = [
    '37 Albert Grove, Nottingham, NG7 1PB, Royaume-Uni',
    '37 Albert Grove, Ruabon, Wrexham, LL14 6AF, Royaume-Uni',
    '3 Albert Grove, Southsea, PO5 1NG, Royaume-Uni',
    '7 Albert Grove, Southsea, PO5 1NG, Royaume-Uni',
    '7 Albert Grove, Headingley, Leeds, LS6 4DA, Royaume-Uni',
    '37 Albert Grove, Nottingham, NG7 1, Royaume-Uni',
    'Albert Grove, Bristol, BS5 7, Royaume-Uni',
    'Albert Grove, Londres, SW20 8, Royaume-Uni',
    'Albert Grove, Southsea, PO5 1, Royaume-Uni',
];

const TextField = ({ id, label, hint, children, ...rest }) => (
    <Field>
        <LabelRow>
            <label htmlFor={id}>{label}</label>
            {hint && <Hint>{hint}</Hint>}
        </LabelRow>
        <Input id={id} type="text" {...rest} />
        {children}
    </Field>
);

const AssetForm = () => (
    <Form>
        <Row $columns="320px 1fr">
            <TextField id="assetId" label="Asset ID *" placeholder="Enter an Asset ID" />
            <TextField id="assetName" label="Name *" hint="* Required fields" placeholder="Enter an Asset name" />
        </Row>
        <Row>
            <TextField id="address" label="Look for the Asset address and automatically find its latitude and longitude"
                defaultValue="37 albert grove" $focused>
                <Caret />
                <Suggestions role="listbox">
                    {addresses.map((address, i) => (
                        <Suggestion key={address} role="option" aria-selected={i === 0} $active={i === 0}>
                            {address}
                        </Suggestion>
                    ))}
                    <SuggestionScroll role="presentation" />
                </Suggestions>
            </TextField>
        </Row>
        <Row $columns="1fr 1fr" $below>
            <TextField id="zipcode" label="Zipcode" />
            <TextField id="phone" label="Phone number" />
        </Row>
    </Form>
);

const MapPanel = () => (
    <section>
        <MapTitle>Map</MapTitle>
        <MapText>
            Search the exact position of the Asset on the map, then make a right-click to fill the latitude and
            longitude coordinate fields on the left.
        </MapText>
        <MapFrame>
            <WorldMap />
            <MapControls>
                <MapButton type="button" aria-label="Zoom in">
                    <svg width="24" height="24" stroke="#333" strokeWidth="6" strokeLinecap="round">
                        <path d="M12 3v18M3 12h18" />
                    </svg>
                </MapButton>
                <MapButton type="button" aria-label="Zoom out">
                    <svg width="24" height="24" stroke="#333" strokeWidth="6" strokeLinecap="round">
                        <path d="M3 12h18" />
                    </svg>
                </MapButton>
                <MapButton type="button" aria-label="Reset north">
                    <svg width="16" height="36">
                        <path d="M0 16L8 0l8 16z" fill="#333" />
                        <path d="M0 20h16L8 36z" fill="#ccc" />
                    </svg>
                </MapButton>
            </MapControls>
            <MapInfo type="button" aria-label="Map credits">
                <svg width="48" height="48">
                    <rect width="48" height="41" rx="22" fill="#fff" />
                    <circle cx="24" cy="24" r="15" fill="#000" />
                    <circle cx="24" cy="16.5" r="2.8" fill="#fff" />
                    <path d="M24 24v8" stroke="#fff" strokeWidth="5" strokeLinecap="round" />
                </svg>
            </MapInfo>
        </MapFrame>
    </section>
);

const Backdrop = () => (
    <Page>
        <Sidebar>
            <SidebarIcons fill="none" stroke="#1b2438" strokeWidth="3">
                <rect y="294" width="100" height="99" fill="#06122a" stroke="none" />
                <path d="M19 86V77h10V60h30v26z" fill="#182236" stroke="none" />
                <path d="M50 215L32 229q-4 3-4 8v14q0 8 10 8h20M37 246l8-8" />
                <path d="M50 322H38q-10 0-10 10v24q0 9 10 9h14M28 342l14 4" />
                <path d="M46 428q-8 0-10 5l-6 12q-2 4-2 8v14q0 7 8 7h16M29 442q6 8 10 0l2-13" />
                <circle cx="40" cy="549" r="7" />
                <path d="M28 569q1-10 14-9" />
                <circle cx="48" cy="1320" r="20" />
                <path d="M32 1308l10 6M30 1332l10-6" strokeWidth="6" />
                <rect x="28" y="1439" width="44" height="42" rx="9" />
            </SidebarIcons>
        </Sidebar>
        <Panel>
            <Avatars>
                <Avatar $color="#071b3b">Lo</Avatar>
                <Avatar $color="#0d2138">Ad</Avatar>
                <Avatar $color="#061a24">Me</Avatar>
                <Avatar $color="#211b2c">Di</Avatar>
            </Avatars>
        </Panel>
    </Page>
);

const App = () => (
    <ThemeProvider theme={theme}>
        <GlobalStyle />
        <Backdrop />
        <Dialog role="dialog" aria-labelledby="dialogTitle">
            <Header>
                <Title id="dialogTitle">Add an Asset in BE - Prod</Title>
                <Toggle>
                    <ToggleButton type="button" $active>Simplified</ToggleButton>
                    <ToggleButton type="button">Developer</ToggleButton>
                </Toggle>
            </Header>
            <Tabs>
                {tabs.map((tab, i) => <Tab key={tab} type="button" $active={i === 0}>{tab}</Tab>)}
            </Tabs>
            <Body>
                <AssetForm />
                <MapPanel />
                <BodyScroll />
            </Body>
            <Footer>
                <FooterButton type="button">Cancel</FooterButton>
                <FooterButton type="button" $primary>Add</FooterButton>
            </Footer>
        </Dialog>
    </ThemeProvider>
);

export default App;
